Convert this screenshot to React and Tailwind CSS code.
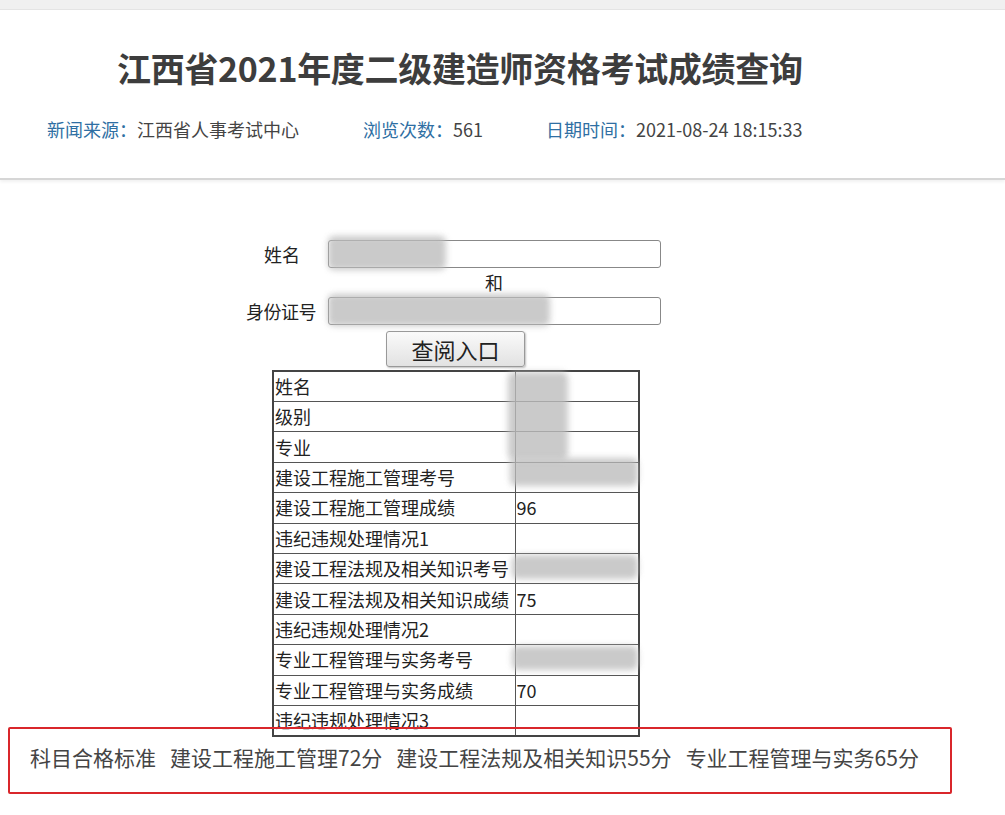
import React from 'react';

const rows = [
  ['姓名', ''],
  ['级别', ''],
  ['专业', ''],
  ['建设工程施工管理考号', ''],
  ['建设工程施工管理成绩', '96'],
  ['违纪违规处理情况1', ''],
  ['建设工程法规及相关知识考号', ''],
  ['建设工程法规及相关知识成绩', '75'],
  ['违纪违规处理情况2', ''],
  ['专业工程管理与实务考号', ''],
  ['专业工程管理与实务成绩', '70'],
  ['违纪违规处理情况3', ''],
];

function Blur({ className }) {
  return <div className={`pointer-events-none absolute rounded-md bg-[#bdbdbd] opacity-80 blur-[3px] ${className}`} />;
}

export default function App() {
  const font = { fontFamily: '"Noto Sans CJK SC", "Noto Sans", sans-serif' };
  return (
    <div className="relative min-h-[815px] w-[1005px] overflow-hidden bg-white text-[#333]" style={font}>
      <div className="h-[10px] border-b border-[#e4e4e4] bg-[#f0f0f0]" />

      <div className="border-b-2 border-[#d6d6d6] pb-[37px] shadow-[0_2px_3px_rgba(0,0,0,0.06)]">
        <h1 className="pl-[117px] pt-[36px] text-[34px] font-bold leading-[44px] tracking-[-0.3px] text-[#3d3d3d]">
          江西省2021年度二级建造师资格考试成绩查询
        </h1>
        <div className="mt-[27px] flex pl-[47px] text-[18px] leading-[24px] text-[#444]">
          <span className="w-[316px]"><span className="text-[#2f6fa3]">新闻来源：</span>江西省人事考试中心</span>
          <span className="w-[183px]"><span className="text-[#2f6fa3]">浏览次数：</span>561</span>
          <span><span className="text-[#2f6fa3]">日期时间：</span>2021-08-24 18:15:33</span>
        </div>
      </div>

      <div className="mt-[60px] pl-[246px] text-[18px] text-[#222]">
        <div className="relative flex h-[28px] items-center">
          <span className="w-[82px] pr-[28px] text-right">姓名</span>
          <div className="h-[28px] w-[333px] rounded-[3px] border border-[#888] bg-white" />
          <Blur className="left-[82px] top-[-4px] h-[34px] w-[118px]" />
        </div>
        <div className="pl-[239px] leading-[29px]">和</div>
        <div className="relative flex h-[28px] items-center">
          <span className="w-[82px] tracking-[-0.5px]">身份证号</span>
          <div className="h-[28px] w-[333px] rounded-[3px] border border-[#888] bg-white" />
          <Blur className="left-[82px] top-[-3px] h-[32px] w-[222px]" />
        </div>
        <button className="ml-[140px] mt-[6px] h-[36px] w-[139px] rounded-[3px] border border-[#999] bg-gradient-to-b from-[#fafafa] to-[#e2e2e2] text-[22px] leading-[34px] text-[#222] shadow-[1px_1px_2px_rgba(0,0,0,0.25)]">
          查阅入口
        </button>

        <div className="relative ml-[26px] mt-[3px] w-[368px]">
          <table className="w-[368px] border-collapse border-2 border-[#444] text-[18px] leading-[29px]">
            <tbody>
              {rows.map(([k, v], i) => (
                <tr key={i} className="h-[30.4px]">
                  <td className="w-[242px] border border-[#555] px-[1px] py-0 align-middle whitespace-nowrap">{k}</td>
                  <td className="border border-[#555] px-[1px] py-0 align-middle">{v}</td>
                </tr>
              ))}
            </tbody>
          </table>
          <Blur className="left-[236px] top-[2px] h-[88px] w-[60px]" />
          <Blur className="left-[238px] top-[88px] h-[28px] w-[128px]" />
          <Blur className="left-[240px] top-[185px] h-[24px] w-[126px]" />
          <Blur className="left-[240px] top-[276px] h-[24px] w-[126px]" />
        </div>
      </div>

      <div className="absolute left-[8px] top-[727px] flex h-[67px] w-[944px] items-start gap-[14px] rounded-[2px] border-2 border-[#d9262b] pl-[20px] pt-[14px] text-[21px] leading-[28px] text-[#444] whitespace-nowrap">
        <span>科目合格标准</span>
        <span>建设工程施工管理72分</span>
        <span>建设工程法规及相关知识55分</span>
        <span>专业工程管理与实务65分</span>
      </div>
    </div>
  );
}
